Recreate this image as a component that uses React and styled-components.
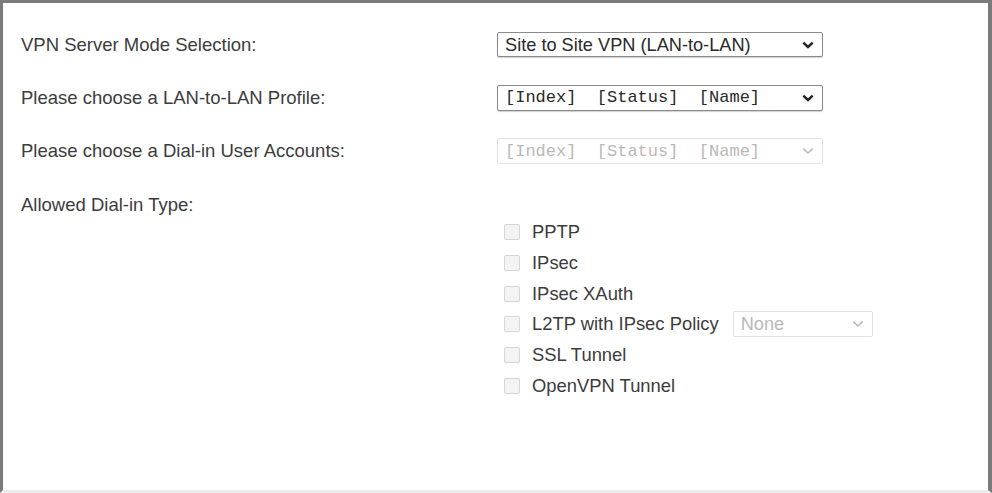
import React from 'react'
import styled, { createGlobalStyle } from 'styled-components'

const GlobalStyle = createGlobalStyle`
  html, body {
    margin: 0;
    padding: 0;
    background: #ffffff;
  }
  body {
    font-family: "Liberation Sans", Arial, sans-serif;
    color: #333333;
  }
`

const Frame = styled.div`
  box-sizing: border-box;
  width: 992px;
  height: 493px;
  border-top: 3px solid #7b7b7b;
  border-left: 3px solid #7b7b7b;
  border-right: 4px solid #7b7b7b;
  border-bottom: 3px solid #ececec;
  padding: 15px 0 0 18px;
  background: #ffffff;
`

const FormRow = styled.div`
  display: grid;
  grid-template-columns: 476px 1fr;
  align-items: ${(p) => (p.$top ? 'start' : 'center')};
  min-height: 53.2px;
`

const Label = styled.div`
  font-size: 18.5px;
  line-height: 53.2px;
  color: #3c3c3c;
  white-space: nowrap;
`

const SelectWrap = styled.div`
  position: relative;
  width: ${(p) => p.$width}px;
  height: ${(p) => p.$height || 26}px;
`

const Select = styled.select`
  appearance: none;
  -webkit-appearance: none;
  box-sizing: border-box;
  width: 100%;
  height: 100%;
  margin: 0;
  padding: 0 0 0 7px;
  border: 1px solid ${(p) => (p.disabled ? '#e2e2e2' : '#8a8a8a')};
  border-radius: 2px;
  background: #ffffff;
  box-shadow: ${(p) => (p.disabled ? 'none' : '0 1px 1px rgba(0,0,0,0.18)')};
  font-family: ${(p) => (p.$mono ? '"Liberation Mono", "Courier New", monospace' : '"Liberation Sans", Arial, sans-serif')};
  font-size: ${(p) => (p.$mono ? '17px' : '18.2px')};
  color: ${(p) => (p.disabled ? '#b9b9b9' : '#2a2a2a')};
  outline: none;
  &:disabled {
    opacity: 1;
  }
`

const Chevron = styled.svg`
  position: absolute;
  right: 9px;
  top: 50%;
  margin-top: -4px;
  width: 12px;
  height: 8px;
  pointer-events: none;
`

const CheckList = styled.div`
  display: flex;
  flex-direction: column;
  padding: 39px 0 0 7px;
`

const CheckRow = styled.label`
  display: flex;
  align-items: center;
  height: 30.8px;
  gap: 12px;
  font-size: 18.4px;
  color: #3c3c3c;
  white-space: nowrap;
`

const Box = styled.span`
  box-sizing: border-box;
  width: 16px;
  height: 16px;
  border: 1px solid #d6d6d6;
  border-radius: 2px;
  background: #f3f3f3;
  flex: none;
`

const Inline = styled.div`
  margin-left: 2px;
`

const Arrow = ({ disabled }) => (
  <Chevron viewBox="0 0 12 8">
    <path
      d="M1.3 1.6 L6 6 L10.7 1.6"
      fill="none"
      stroke={disabled ? '#b8b8b8' : '#222222'}
      strokeWidth={disabled ? 1.5 : 2.4}
    />
  </Chevron>
)

const Dropdown = ({ width, height, value, mono, disabled }) => (
  <SelectWrap $width={width} $height={height}>
    <Select $mono={mono} disabled={disabled} defaultValue={value}>
      <option value={value}>{value}</option>
    </Select>
    <Arrow disabled={disabled} />
  </SelectWrap>
)

// the router page pads the profile columns with two spaces
const profileText = '[Index]\u00a0\u00a0[Status]\u00a0\u00a0[Name]'

const dialTypes = ['PPTP', 'IPsec', 'IPsec XAuth', 'L2TP with IPsec Policy', 'SSL Tunnel', 'OpenVPN Tunnel']

export default function App() {
  return (
    <>
      <GlobalStyle />
      <Frame>
        <FormRow>
          <Label>VPN Server Mode Selection:</Label>
          <Dropdown width={326} height={25} value="Site to Site VPN (LAN-to-LAN)" />
        </FormRow>
        <FormRow>
          <Label>Please choose a LAN-to-LAN Profile:</Label>
          <Dropdown width={326} height={26} mono value={profileText} />
        </FormRow>
        <FormRow>
          <Label>Please choose a Dial-in User Accounts:</Label>
          <Dropdown width={326} height={26} mono disabled value={profileText} />
        </FormRow>
        <FormRow $top>
          <Label>Allowed Dial-in Type:</Label>
          <CheckList>
            {dialTypes.map((t) => (
              <CheckRow key={t}>
                <Box />
                <span>{t}</span>
                {t.startsWith('L2TP') && (
                  <Inline>
                    <Dropdown width={140} height={26} disabled value="None" />
                  </Inline>
                )}
              </CheckRow>
            ))}
          </CheckList>
        </FormRow>
      </Frame>
    </>
  )
}
